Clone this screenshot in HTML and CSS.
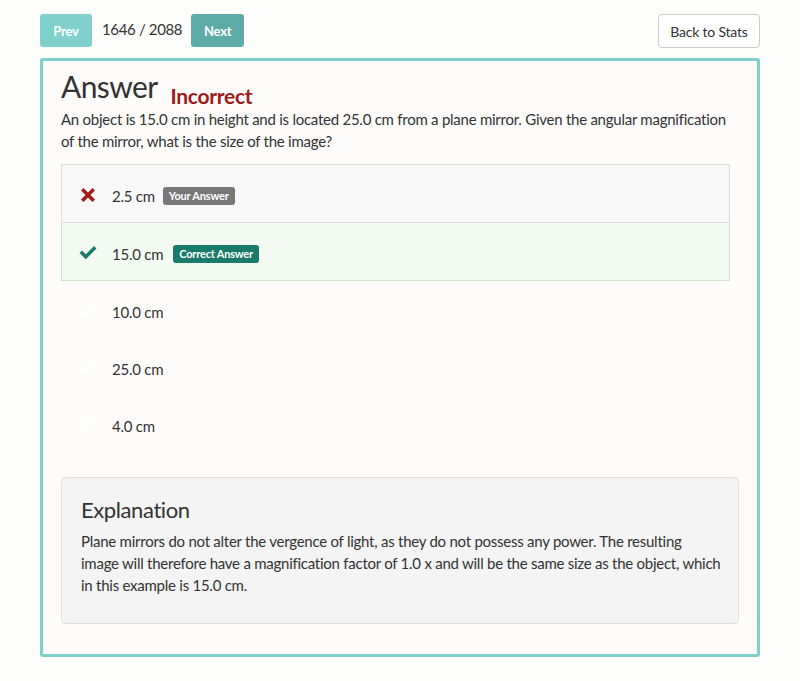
FILE: index.html
```html
<!DOCTYPE html>
<html>
<head>
<meta charset="utf-8">
<link rel="stylesheet" href="styles.css">
</head>
<body>
<div class="page">
  <div class="topbar">
    <div class="nav">
      <button class="btn btn-prev">Prev</button>
      <span class="count">1646 / 2088</span>
      <button class="btn btn-next">Next</button>
    </div>
    <button class="btn-back">Back to Stats</button>
  </div>
  <div class="panel">
    <div class="title">
      <h2>Answer</h2>
      <span class="status">Incorrect</span>
    </div>
    <p class="question">An object is 15.0 cm in height and is located 25.0 cm from a plane mirror. Given the angular magnification of the mirror, what is the size of the image?</p>
    <ul class="options">
      <li class="option wrong">
        <svg class="icon" viewBox="0 0 20 20"><path d="M3 5.5 L5.5 3 L10 7.5 L14.5 3 L17 5.5 L12.5 10 L17 14.5 L14.5 17 L10 12.5 L5.5 17 L3 14.5 L7.5 10 Z" fill="#a11c1c"/></svg>
        <span class="val">2.5 cm</span>
        <span class="badge badge-grey">Your Answer</span>
      </li>
      <li class="option correct">
        <svg class="icon" viewBox="0 0 20 20"><path d="M1.5 10 L4 7.5 L7.8 11.3 L16 3 L18.5 5.5 L7.8 16.2 Z" fill="#1c7a6c"/></svg>
        <span class="val">15.0 cm</span>
        <span class="badge badge-green">Correct Answer</span>
      </li>
      <li class="option">
        <svg class="icon" viewBox="0 0 20 20"><path d="M1.5 10 L4 7.5 L7.8 11.3 L16 3 L18.5 5.5 L7.8 16.2 Z" fill="#ffffff"/></svg>
        <span class="val">10.0 cm</span>
      </li>
      <li class="option">
        <svg class="icon" viewBox="0 0 20 20"><path d="M1.5 10 L4 7.5 L7.8 11.3 L16 3 L18.5 5.5 L7.8 16.2 Z" fill="#ffffff"/></svg>
        <span class="val">25.0 cm</span>
      </li>
      <li class="option">
        <svg class="icon" viewBox="0 0 20 20"><path d="M1.5 10 L4 7.5 L7.8 11.3 L16 3 L18.5 5.5 L7.8 16.2 Z" fill="#ffffff"/></svg>
        <span class="val">4.0 cm</span>
      </li>
    </ul>
    <div class="explanation">
      <h3>Explanation</h3>
      <p>Plane mirrors do not alter the vergence of light, as they do not possess any power. The resulting<br>image will therefore have a magnification factor of 1.0 x and will be the same size as the object, which in this example is 15.0 cm.</p>
    </div>
  </div>
</div>
</body>
</html>
```

FILE: styles.css
```css
* { box-sizing: border-box; }
html, body { margin: 0; padding: 0; background: #fdfdfc; }
body {
  font-family: Lato, "Open Sans", sans-serif;
  color: #333;
  font-size: 15px;
  letter-spacing: -0.25px;
}
.page {
  width: 720px;
  margin-left: 40px;
  padding-top: 14px;
}
.topbar {
  display: flex;
  justify-content: space-between;
  align-items: flex-start;
}
.nav {
  display: flex;
  align-items: center;
}
.btn {
  height: 33px;
  border: none;
  border-radius: 3px;
  color: #fff;
  font-family: Lato, sans-serif;
  font-weight: bold;
  font-size: 13px;
  letter-spacing: -0.2px;
  padding: 0 12px;
}
.btn-prev { background: #80d0cd; width: 52px; }
.btn-next { background: #5eaca9; width: 53px; }
.count {
  font-size: 15px;
  color: #333;
  margin: 0 9px 0 10px;
  letter-spacing: -0.35px;
  position: relative;
  top: -2px;
}
.btn-back {
  height: 34px;
  width: 102px;
  background: #fff;
  border: 1px solid #ccc;
  border-radius: 4px;
  font-family: Lato, sans-serif;
  font-size: 14px;
  letter-spacing: -0.2px;
  color: #333;
  padding: 0;
}
.panel {
  margin-top: 10px;
  border: 3px solid #7fcfcb;
  border-radius: 3px;
  background: #fdfcfb;
  padding: 5px 18px 31px 18px;
  height: 599px;
}
.title {
  display: flex;
  align-items: baseline;
}
.title h2 {
  margin: 0;
  font-size: 30px;
  font-weight: normal;
  letter-spacing: -0.6px;
  color: #333;
  line-height: 40px;
}
.status {
  margin-left: 13px;
  font-size: 21px;
  font-weight: bold;
  letter-spacing: -0.3px;
  color: #9e1b1b;
  position: relative;
  top: 6px;
}
.question {
  margin: 0;
  line-height: 22px;
  color: #333;
  padding-top: 2px;
}
.options {
  list-style: none;
  margin: 12px 9px 0 0;
  padding: 0;
}
.option {
  display: flex;
  align-items: center;
  height: 57px;
  padding-left: 16px;
  padding-top: 5px;
  border: 1px solid transparent;
}
.option.wrong {
  height: 59px;
  margin-bottom: -1px;
  background: #f8f8f8;
  border-color: #dcdcdc;
  position: relative;
  z-index: 1;
}
.option.correct {
  height: 59px;
  background: #f3faf1;
  border-color: #cde4cb;
}
.icon { width: 20px; height: 20px; margin-right: 14px; position: relative; top: -1px; }
.val { color: #333; font-size: 15px; }
.badge {
  margin-left: 8px;
  color: #fff;
  font-weight: bold;
  font-size: 11px;
  letter-spacing: -0.2px;
  padding: 2px 6px 3px;
  border-radius: 3px;
  line-height: 13px;
}
.badge-grey { background: #777; }
.badge-green { background: #1a7a6b; margin-left: 10px; }
.explanation {
  margin-top: 25px;
  background: #f4f4f4;
  border: 1px solid #e0e0e0;
  border-radius: 4px;
  padding: 18px 10px 26px 19px;
  height: 147px;
}
.explanation h3 {
  margin: 0 0 6px 0;
  font-size: 22px;
  font-weight: normal;
  letter-spacing: -0.4px;
  color: #333;
  line-height: 28px;
}
.explanation p {
  margin: 0;
  line-height: 22px;
  font-size: 15px;
}
```
